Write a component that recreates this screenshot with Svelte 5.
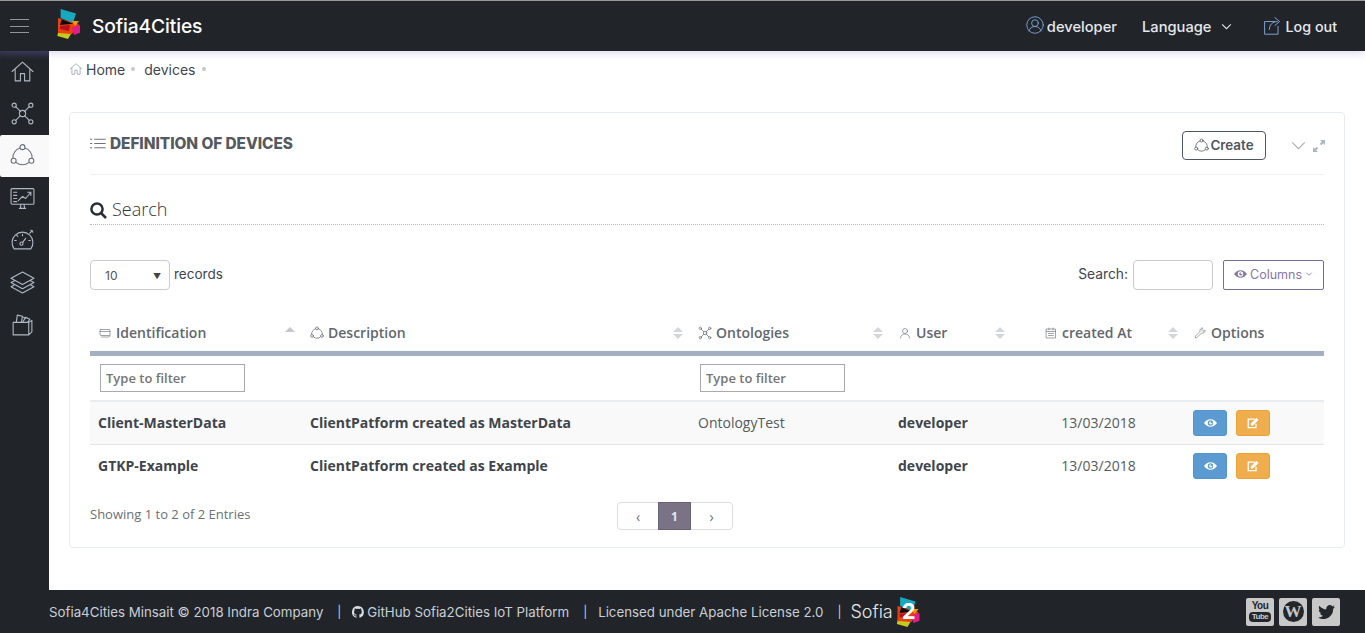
<script>
  const sideIcons = ['home', 'net', 'dev', 'mon', 'gauge', 'layers', 'box'];
  const columns = [
    { key: 'id', label: 'Identification', icon: 'card', sort: 'up' },
    { key: 'desc', label: 'Description', icon: 'dev', sort: 'both' },
    { key: 'ont', label: 'Ontologies', icon: 'net', sort: 'both' },
    { key: 'user', label: 'User', icon: 'user', sort: 'both' },
    { key: 'date', label: 'created At', icon: 'cal', sort: 'both' },
    { key: 'opt', label: 'Options', icon: 'wrench', sort: 'none' }
  ];
  const rows = [
    { id: 'Client-MasterData', desc: 'ClientPatform created as MasterData', ont: 'OntologyTest', user: 'developer', date: '13/03/2018' },
    { id: 'GTKP-Example', desc: 'ClientPatform created as Example', ont: '', user: 'developer', date: '13/03/2018' }
  ];
</script>

{#snippet icon(name)}
  <svg class="ico" viewBox="0 0 24 24" fill="none" stroke="currentColor" stroke-width="1.2" stroke-linecap="round" stroke-linejoin="round">
    {#if name === 'home'}
      <path d="M2 12 12 3l10 9M5 10v11h5v-7h4v7h5V10" />
    {:else if name === 'net'}
      <circle cx="12" cy="12" r="3" /><circle cx="4" cy="4" r="2" /><circle cx="20" cy="4" r="2" /><circle cx="4" cy="20" r="2" /><circle cx="20" cy="20" r="2" />
      <path d="M5.5 5.5 10 10M18.500 5.500 14 10M5.500 18.500 10 14M18.500 18.500 14 14" />
    {:else if name === 'dev'}
      <circle cx="12" cy="4" r="2.400" /><circle cx="3.500" cy="17" r="2.400" /><circle cx="20.500" cy="17" r="2.400" />
      <path d="M9.700 4.800A9.500 9.500 0 0 0 2.800 14.400M14.300 4.800A9.500 9.500 0 0 1 21.200 14.400M6 18.800a9.500 9.500 0 0 0 12 0" />
    {:else if name === 'mon'}
      <rect x="1" y="2.500" width="22" height="15" rx="1" /><path d="M9 21.500h6M10.500 17.500 10 21.500M13.500 17.500l.5 4M3.500 6h3M3.500 9h3M3.500 12h3M3.500 15h3M8 14l4-4 3 2 5-6M17 6h3v3" />
    {:else if name === 'gauge'}
      <path d="M4 20a10 10 0 1 1 16 0ZM19 5l2.500-2.500M20 2l2 2M12 6v1.500M6 12H4.500M19.500 12H18M7.500 8 6.500 7" /><circle cx="11" cy="15" r="1.500" /><path d="M12 14l3-4" />
    {:else if name === 'layers'}
      <path d="M12 2 23 8l-11 6L1 8ZM4 10.500 1 12l11 6 11-6-3-1.500M4 14.500 1 16l11 6 11-6-3-1.500" />
    {:else if name === 'box'}
      <path d="M3 10h15v12H3ZM18 10l3-2v11l-3 3M6 10l1-7 5 1-1 6M12 10l3-5 4 2-2 3M13 5l2 1" />
    {:else if name === 'card'}
      <rect x="2" y="5" width="20" height="12" rx="2" /><path d="M5 20h14a3 3 0 0 0 3-3M2 9h20" />
    {:else if name === 'user'}
      <circle cx="12" cy="8" r="5" /><path d="M3 22c0-5 4-8 9-8s9 3 9 8" />
    {:else if name === 'cal'}
      <rect x="3" y="4" width="18" height="18" /><path d="M3 9h18M8 2v4M16 2v4M7 13h10M7 17h10" />
    {:else if name === 'wrench'}
      <path d="M3 21c-1-1-1-2 0-3l9-9c-1-3 1-7 5-7l1 .5-3 3.500 3 3 3.500-3 .5 1c0 4-4 6-7 5l-9 9c-1 1-2 1-3 0Z" />
    {:else if name === 'list'}
      <path d="M8 6h15M8 12h15M8 18h15M2 6h2M2 12h2M2 18h2" />
    {:else if name === 'profile'}
      <circle cx="12" cy="12" r="11" /><circle cx="12" cy="9.500" r="4.500" /><path d="M4 20c1-4 4-6 8-6s7 2 8 6" />
    {:else if name === 'share'}
      <path d="M15 7H2v16h17V13M8 17c0-6 4-10 10-10M15 2l6 5-6 5" />
    {/if}
  </svg>
{/snippet}

{#snippet eye()}
  <svg class="eye" viewBox="0 0 24 16" fill="currentColor">
    <path fill-rule="evenodd" d="M12 1C7 1 3 4 0 8c3 4 7 7 12 7s9-3 12-7c-3-4-7-7-12-7Zm0 2a5 5 0 1 1 0 10 5 5 0 0 1 0-10Zm-1 2a3 3 0 1 0 4 1 1.500 1.500 0 1 1-2-1 3 3 0 0 0-2 0Z" />
  </svg>
{/snippet}

{#snippet logo(two)}
  <span class="logo">
    <svg viewBox="0 0 24 30">
      <polygon points="3.600,0 19,4.600 16,14 3.600,9" fill="#16a9c0" />
      <polygon points="2.300,18 14.700,23.700 11,30 0.300,27" fill="#c4cb1a" />
      <polygon points="1,9 22,15 15,25 1,24" fill="#e8420e" />
      <polygon points="4.700,10.300 16.300,14.700 3,16" fill="#0b0b0b" />
      <polygon points="15,12 22,12 18,17" fill="#f59a0c" />
      <polygon points="3,17 13,16 12,22 3,20" fill="#b80f1d" />
      <polygon points="14.700,18.700 23,16 23,23.700 17,26" fill="#e21d8a" />
    </svg>
    {#if two}<b>2</b>{/if}
  </span>
{/snippet}

<div class="page">
  <header class="top">
    <div class="burger"><i></i><i></i><i></i></div>
    <div class="brand">{@render logo(false)}<span>Sofia4Cities</span></div>
    <nav class="topnav">
      <span class="nav a">{@render icon('profile')}developer</span>
      <span class="nav b">Language
        <svg class="chev" viewBox="0 0 12 8" fill="none" stroke="currentColor" stroke-width="1.200"><path d="M1 1.500 6 6.500l5-5" /></svg>
      </span>
      <span class="nav c">{@render icon('share')}Log out</span>
    </nav>
  </header>

  <div class="middle">
    <aside class="side">
      {#each sideIcons as s}
        <div class="sideitem" class:active={s === 'dev'}>{@render icon(s)}</div>
      {/each}
    </aside>

    <main class="content">
      <div class="crumbs">
        <span class="crumbhome">{@render icon('home')}Home</span><i class="dot"></i>
        <span class="crumbdev">devices</span><i class="dot"></i>
      </div>

      <section class="portlet">
        <div class="ptitle">
          <div class="caption">{@render icon('list')}<span>DEFINITION OF DEVICES</span></div>
          <div class="actions">
            <button class="create">{@render icon('dev')}Create</button>
            <svg class="collapse" viewBox="0 0 16 10" fill="none" stroke="currentColor" stroke-width="1.300"><path d="M1 1.500 8 8.500l7-7" /></svg>
            <svg class="expand" viewBox="0 0 12 12" fill="currentColor"><path d="M7 0h5v5l-1.800-1.800-2 2-1.400-1.400 2-2ZM5 12H0V7l1.800 1.800 2-2 1.400 1.400-2 2Z" /></svg>
          </div>
        </div>

        <div class="search">
          <svg viewBox="0 0 17 17" fill="none" stroke="currentColor" stroke-width="2.500"><circle cx="7" cy="7" r="5.600" /><path d="m11 11 5 5" /></svg>
          <span>Search</span>
        </div>

        <div class="tools">
          <div class="left">
            <div class="select"><span>10</span><em>▼</em></div>
            <span>records</span>
          </div>
          <div class="right">
            <span>Search:</span>
            <div class="sinput"></div>
            <button class="columns">{@render eye()}Columns
              <svg viewBox="0 0 12 8" fill="none" stroke="currentColor" stroke-width="1.300"><path d="M2 2 6 6l4-4" /></svg>
            </button>
          </div>
        </div>

        <table>
          <colgroup>
            <col class="c1" /><col class="c2" /><col class="c3" /><col class="c4" /><col class="c5" /><col class="c6" />
          </colgroup>
          <thead>
            <tr class="head">
              {#each columns as c}
                <th class={c.key}>
                  <div class="thin">
                    <span class="lab">{@render icon(c.icon)}{c.label}</span>
                    {#if c.sort !== 'none'}
                      <span class="sort" class:up={c.sort === 'up'}><u></u>{#if c.sort === 'both'}<s></s>{/if}</span>
                    {/if}
                  </div>
                </th>
              {/each}
            </tr>
            <tr class="filter">
              <td><div class="fin">Type to filter</div></td>
              <td></td>
              <td><div class="fin">Type to filter</div></td>
              <td></td><td></td><td></td>
            </tr>
          </thead>
          <tbody>
            {#each rows as r, i}
              <tr class:odd={i === 0}>
                <td class="bold">{r.id}</td>
                <td class="bold">{r.desc}</td>
                <td>{r.ont}</td>
                <td class="bold">{r.user}</td>
                <td class="center">{r.date}</td>
                <td class="btns">
                  <div class="btnrow">
                    <button class="blue">{@render eye()}</button>
                    <button class="orange">
                      <svg viewBox="0 0 16 14" fill="none" stroke="currentColor" stroke-width="1.500"><path d="M10 2.500H2.500v10h9V8" /><path d="M6 9.500V7.500l6-6 2 2-6 6Z" fill="currentColor" stroke-width="1" /></svg>
                    </button>
                  </div>
                </td>
              </tr>
            {/each}
          </tbody>
        </table>

        <div class="tfoot">
          <span class="info">Showing 1 to 2 of 2 Entries</span>
          <div class="pager">
            <span class="pg">‹</span><span class="pg cur">1</span><span class="pg">›</span>
          </div>
        </div>
      </section>
    </main>
  </div>

  <footer class="foot">
    <span class="f1">Sofia4Cities Minsait © 2018 Indra Company</span>
    <span class="bar">|</span>
    <svg class="gh" viewBox="0 0 16 16" fill="currentColor"><path d="M8 0a8 8 0 0 0-2.500 15.600c.4.100.5-.2.500-.4v-1.400c-2.200.5-2.700-1-2.700-1-.4-.9-.9-1.200-.9-1.200-.7-.5.100-.5.100-.5.800.100 1.200.8 1.200.8.700 1.200 1.900.9 2.300.7.100-.5.300-.9.500-1.100-1.800-.2-3.700-.9-3.700-4 0-.9.300-1.600.8-2.100-.1-.2-.4-1 .1-2.100 0 0 .7-.2 2.200.8a7.500 7.500 0 0 1 4 0c1.500-1 2.200-.8 2.200-.8.400 1.100.2 1.900.1 2.100.5.600.8 1.300.8 2.100 0 3.100-1.900 3.700-3.700 3.900.3.300.6.800.6 1.500v2.200c0 .2.100.5.600.4A8 8 0 0 0 8 0Z" /></svg>
    <span class="f2">GitHub Sofia2Cities IoT Platform</span>
    <span class="bar">|</span>
    <span class="f3">Licensed under Apache License 2.0</span>
    <span class="bar">|</span>
    <span class="sofia">Sofia</span>
    {@render logo(true)}
    <div class="social">
      <span class="soc yt"><b>You</b><b class="tube">Tube</b></span>
      <span class="soc wp"><b>W</b></span>
      <span class="soc tw"><svg viewBox="0 0 24 20" fill="currentColor"><path d="M24 2.400c-.9.400-1.800.700-2.800.800 1-.6 1.800-1.600 2.200-2.700-1 .6-2 1-3.100 1.200A4.900 4.900 0 0 0 11.900 6.200C7.800 6 4.200 4 1.700.9.400 3.200 1 6 3.200 7.500c-.8 0-1.600-.2-2.200-.6 0 2.400 1.700 4.400 3.900 4.900-.7.200-1.500.2-2.200.1.600 2 2.400 3.400 4.600 3.400A10 10 0 0 1 0 17.800 14 14 0 0 0 21.500 5.300c1-.7 1.800-1.700 2.500-2.900Z" /></svg></span>
    </div>
  </footer>
</div>

<style>
  :global(body) { margin: 0; background: #fff; }
  .page { width: 1365px; height: 633px; display: flex; flex-direction: column; overflow: hidden; font-family: Inter, "Liberation Sans", sans-serif; color: #3f4550; }
  .ico { width: 1em; height: 1em; flex: none; display: inline-block; }

  .top { height: 50px; flex: none; border-top: 1px solid #999; background: #212529; display: flex; align-items: center; color: #e4e8ee; box-shadow: 0 2px 8px rgba(110, 100, 190, .25); position: relative; z-index: 2; }
  .burger { width: 19px; margin-left: 10px; display: flex; flex-direction: column; gap: 5.500px; }
  .burger i { height: 1px; background: #8f959d; display: block; }
  .brand { display: flex; align-items: center; margin-left: 28px; color: #fff; font-size: 19.200px; font-weight: 500; letter-spacing: -.1px; }
  .brand .logo { width: 24px; height: 30px; margin-right: 11px; margin-bottom: 5px; }
  .logo { display: inline-block; position: relative; }
  .logo svg { width: 100%; height: 100%; display: block; }
  .logo b { position: absolute; left: 7px; top: 0; color: #fff; font-size: 22px; font-weight: 700; line-height: 28px; }
  .topnav { margin-left: auto; display: flex; align-items: center; font-size: 14.700px; font-weight: 500; padding-top: 1px; }
  .nav { display: flex; align-items: center; }
  .nav .ico { color: #7ea6d8; }
  .a { gap: 3px; } .a .ico { font-size: 18px; margin-bottom: 3px; }
  .b { margin-left: 25px; gap: 9px; }
  .chev { width: 11px; height: 7px; }
  .c { margin-left: 31px; margin-right: 28px; gap: 4px; font-size: 14.300px; } .c .ico { font-size: 19px; margin-bottom: 3px; }

  .middle { flex: 1; display: flex; min-height: 0; }
  .side { width: 49px; flex: none; background: #212529; box-shadow: inset 0 8px 8px -6px rgba(110, 100, 190, .3); }
  .sideitem { height: 42.200px; display: flex; align-items: center; justify-content: center; color: #aeb8c4; font-size: 25px; padding-right: 5px; box-sizing: border-box; }
  .sideitem:first-child { margin-top: -.5px; }
  .sideitem .ico { stroke-width: 1.050; }
  .sideitem.active { background: #f9f9f9; color: #66707c; border-radius: 2px 0 0 2px; }

  .content { flex: 1; padding: 10px 20px 0; min-width: 0; }
  .crumbs { display: flex; align-items: center; height: 16px; font-size: 14px; padding-left: 1px; }
  .crumbhome { display: flex; align-items: center; gap: 3px; }
  .crumbhome .ico { font-size: 14px; color: #8a94a6; margin-left: -1px; }
  .dot { width: 4px; height: 4px; border-radius: 50%; background: #c5c8cc; margin-left: 6px; }
  .crumbdev { margin-left: 9px; }

  .portlet { margin-top: 35px; height: 436px; box-sizing: border-box; border: 1px solid #e7ecf1; border-radius: 4px; padding: 0 20px; }
  .ptitle { height: 61px; border-bottom: 1px solid #eef1f5; display: flex; justify-content: space-between; }
  .caption { display: flex; align-items: center; height: 60px; font-size: 15.400px; font-weight: 800; color: #555a60; gap: 4px; letter-spacing: -.05px; }
  .caption .ico { font-size: 17px; margin-left: -1px; }
  .actions { display: flex; align-items: flex-start; }
  .create { margin-top: 18px; width: 84px; height: 29px; box-sizing: border-box; border: 1px solid #4e5660; border-radius: 4px; background: #fff; color: #4e5660; font: 600 13.400px Inter, "Liberation Sans", sans-serif; display: flex; align-items: center; justify-content: center; gap: 1px; padding: 0 0 1px; }
  .create .ico { font-size: 15px; }
  .collapse { width: 15px; height: 9px; margin: 28px 0 0 25px; color: #a9adb2; }
  .expand { width: 12px; height: 12px; margin: 27px 0 0 7px; color: #a9b6c4; margin-right: -1px; }

  .search { margin-top: 24px; height: 26px; box-sizing: border-box; border-bottom: 1px dotted #b5b9be; display: flex; align-items: flex-start; font: 300 18px "Open Sans", sans-serif; color: #333; gap: 5px; line-height: 20px; }
  .search svg { width: 17px; height: 17px; margin-top: 3px; color: #2a2f36; }

  .tools { margin-top: 35px; height: 30px; display: flex; justify-content: space-between; font-size: 13.500px; }
  .left, .right { display: flex; align-items: center; }
  .select { width: 80px; height: 30px; box-sizing: border-box; border: 1px solid #ccc; border-radius: 4px; display: flex; align-items: center; justify-content: space-between; padding: 1px 8px 0 14px; margin-right: 4px; font-size: 12px; color: #555; }
  .select em { font-style: normal; font-size: 8px; color: #444; }
  .left > span { margin-top: -2px; }
  .right > span { margin-top: -3px; font-size: 13.800px; }
  .sinput { width: 80px; height: 30px; box-sizing: border-box; border: 1px solid #ccc; border-radius: 4px; margin-left: 5px; }
  .columns { margin-left: 10px; width: 101px; height: 30px; box-sizing: border-box; border: 1px solid #7a6a96; border-radius: 2px; background: #fff; color: #8877a4; font: 400 12.500px Inter, "Liberation Sans", sans-serif; display: flex; align-items: center; justify-content: center; gap: 3px; padding: 0 0 2px; }
  .columns svg:last-child { width: 8px; height: 6px; }
  .eye { width: 13px; height: 10px; }

  table { margin-top: 24px; width: 1234px; table-layout: fixed; border-collapse: collapse; font: 400 14px "Open Sans", sans-serif; color: #555a60; }
  .c1 { width: 212px; } .c2 { width: 388px; } .c3 { width: 200px; } .c4 { width: 122px; } .c5 { width: 173px; } .c6 { width: 139px; }
  .head th { height: 37px; padding: 0 7px 0 9px; border-bottom: 5px solid #a3b0c4; font-weight: 600; text-align: left; color: #62676d; vertical-align: middle; }
  .thin { display: flex; align-items: center; justify-content: space-between; }
  .lab { display: flex; align-items: center; gap: 5px; white-space: nowrap; }
  .lab .ico { font-size: 12px; }
  th.desc .lab, th.ont .lab { gap: 4px; } th.desc, th.ont { padding-left: 8px; }
  th.desc .lab .ico, th.ont .lab .ico { font-size: 14px; }
  th.date .thin { padding-left: 24px; }
  .sort { display: flex; flex-direction: column; gap: 2px; width: 10px; align-items: center; }
  .sort u { display: block; border-left: 5px solid transparent; border-right: 5px solid transparent; border-bottom: 5px solid #d4d7da; }
  .sort s { display: block; border-left: 5px solid transparent; border-right: 5px solid transparent; border-top: 5px solid #d4d7da; }
  .sort.up { margin-top: -6px; }
  .sort.up u { border-bottom-color: #c4c7ca; }
  .filter td { height: 44px; padding: 0 10px; border-bottom: 2px solid #e7ecf1; vertical-align: middle; }
  .fin { width: 145px; height: 28px; box-sizing: border-box; border: 1px solid #a9a9a9; padding-left: 5px; line-height: 26px; font-size: 13px; font-weight: 600; color: #757575; }
  tbody td { height: 43px; box-sizing: border-box; padding: 0 8px; border-bottom: 1px solid #e2e4e7; color: #555a60; white-space: nowrap; }
  tbody tr:last-child td { border-bottom: 0; }
  tr.odd td { background: #f9f9f9; }
  td.bold { font-weight: 700; color: #40454c; }
  td.center { text-align: center; }
  .btnrow { display: flex; gap: 9px; }
  .btnrow button { width: 34px; height: 26px; border-radius: 3px; padding: 0; color: #fff; display: flex; align-items: center; justify-content: center; box-sizing: border-box; }
  .blue { background: #5c9bd1; border: 1px solid #5494cc; }
  .orange { background: #f0ad4e; border: 1px solid #eea236; }
  .orange svg { width: 14px; height: 12px; }

  .tfoot { margin-top: 15px; display: flex; align-items: flex-start; }
  .info { font: 400 13px "Open Sans", sans-serif; color: #6b7076; margin-top: 3px; width: 527px; flex: none; }
  .pager { display: flex; width: 116px; height: 28px; box-sizing: border-box; border: 1px solid #ddd; border-radius: 4px; }
  .pg { flex: 1; display: flex; align-items: center; justify-content: center; font: 400 14px "Open Sans", sans-serif; color: #66707c; }
  .pg:first-child { flex: none; width: 40px; }
  .pg.cur { flex: none; width: 33px; margin: -1px 0; background: #7a7285; color: #e4e8ee; font-weight: 700; font-size: 12px; border: 1px solid #6a6375; box-sizing: border-box; }

  .foot { height: 43px; flex: none; background: #212529; display: flex; align-items: center; padding-left: 49px; color: #c8ced6; font-size: 13.300px; font-weight: 400; white-space: nowrap; }
  .bar { color: #c8ced6; font-size: 12px; margin-left: 14px; }
  .gh { width: 12px; height: 12px; margin-left: 11px; margin-right: 3px; color: #d8dde3; }
  .f3 { margin-left: 11px; }
  .sofia { font-size: 18px; font-weight: 300; color: #e8e8e8; margin-left: 9px; }
  .foot .logo { width: 27px; height: 30px; margin-left: 2px; margin-top: 1px; }
  .social { margin-left: auto; display: flex; gap: 5px; margin-right: 25px; }
  .soc { width: 28px; height: 28px; background: #c8c8c8; border-radius: 2px; color: #23272c; display: flex; flex-direction: column; align-items: center; justify-content: center; overflow: hidden; }
  .yt b { font: 700 10px/10px "Liberation Sans Narrow", "Liberation Sans", sans-serif; letter-spacing: -.5px; }
  .yt .tube { background: #23272c; color: #c8c8c8; border-radius: 4px; padding: 0 3px; font-size: 8px; margin-top: 1px; }
  .wp b { width: 21px; height: 21px; border-radius: 50%; background: #23272c; color: #c8c8c8; font: 700 17px/21px "Liberation Serif", serif; text-align: center; }
  .tw svg { width: 17px; height: 14px; }
</style>
